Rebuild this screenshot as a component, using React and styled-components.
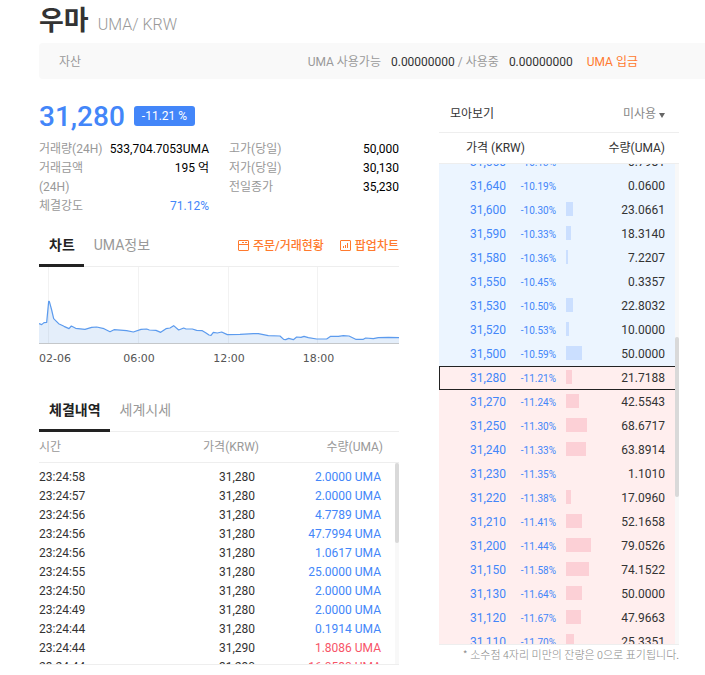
import React, { useEffect, useRef } from "react";
import styled, { createGlobalStyle } from "styled-components";

const GlobalStyle = createGlobalStyle`
  * { box-sizing: border-box; }
  body {
    margin: 0;
    background: #fff;
    color: #333;
    font: 400 12px/19px Roboto, "Noto Sans CJK KR", sans-serif;
    overflow: hidden;
  }
  button, select { font: inherit; color: inherit; border: 0; background: none; padding: 0; margin: 0; cursor: pointer; }
  a { color: #ff7a2e; text-decoration: none; }
  h1, dl, dd, p { margin: 0; font-weight: inherit; }
`;

const BLUE = "#4386f9";
const RED = "#f75467";

const Page = styled.main`
  padding-left: 39px;
`;

const Title = styled.header`
  display: flex;
  align-items: baseline;
  gap: 9px;
  height: 43px;
  line-height: 42px;
`;

const CoinName = styled.h1`
  font-size: 27px;
  font-weight: 700;
  line-height: 42px;
`;

const Pair = styled.span`
  font-size: 16px;
  font-weight: 300;
  color: #999;
`;

const AssetBar = styled.section`
  display: flex;
  align-items: center;
  justify-content: space-between;
  height: 36px;
  padding: 2px 67px 0 20px;
  border-radius: 4px 0 0 4px;
  background: #f9f9f9;
  color: #999;
`;

const AssetValues = styled.div`
  display: flex;
  align-items: center;
  white-space: pre;
`;

const Amount = styled.span`
  margin-left: 10px;
  color: #333;
`;

const Deposit = styled.a`
  margin-left: 14px;
`;

const Columns = styled.div`
  display: grid;
  grid-template-columns: minmax(0, 3fr) minmax(0, 2fr);
  gap: 40px;
  padding: 16px 26px 0 0;
`;

const PriceLine = styled.div`
  display: flex;
  align-items: center;
  gap: 9px;
  height: 42px;
`;

const Price = styled.strong`
  font-size: 28px;
  font-weight: 500;
  color: ${BLUE};
`;

const Badge = styled.span`
  padding: 0 8px;
  border-radius: 3px;
  background: ${BLUE};
  color: #fff;
  line-height: 20px;
`;

const Stats = styled.div`
  display: grid;
  grid-template-columns: 1fr 1fr;
  gap: 20px;
  padding: 3px 0 9px;
`;

const Stat = styled.div`
  display: flex;
  justify-content: space-between;
`;

const StatName = styled.dt`
  max-width: 70px;
  color: #999;
`;

const StatValue = styled.dd`
  color: ${(p) => (p.$accent ? BLUE : "#000")};
`;

const TabBar = styled.nav`
  display: flex;
  align-items: stretch;
  height: 42px;
  box-shadow: inset 0 -1px #eee;
`;

const Tab = styled.button`
  && {
    padding: 2px 9px 0 10px;
    border-bottom: 3px solid ${(p) => (p.$active ? "#222" : "transparent")};
    color: ${(p) => (p.$active ? "#222" : "#999")};
    font-size: 14px;
    font-weight: ${(p) => (p.$active ? 700 : 400)};
  }
`;

const TabLinks = styled.div`
  display: flex;
  align-items: center;
  gap: 16px;
  margin-left: auto;
  font-weight: 500;
`;

const IconLink = styled.a`
  display: flex;
  align-items: center;
  gap: 3px;
`;

const Plot = styled.svg`
  display: block;
  width: 100%;
  height: 77px;
`;

const Hours = styled.div`
  display: grid;
  grid-template-columns: 55fr 90fr 90fr 125fr;
  height: 46px;
  padding-top: 5px;
  font-family: "DejaVu Sans", "Noto Sans CJK KR", sans-serif;
  font-size: 11px;
  color: #555;
`;

const Hour = styled.span`
  text-align: ${(p) => (p.$first ? "left" : "center")};
  margin-right: ${(p) => (p.$last ? "36px" : "0")};
`;

const Trades = styled.table`
  display: block;
  border-bottom: 1px solid #eee;
`;

const TradeHead = styled.thead`
  display: block;
  border-bottom: 1px solid #eee;
  line-height: 30px;
  color: #999;
`;

const TradeArea = styled.div`
  position: relative;
`;

const TradeBody = styled.tbody`
  display: block;
  height: 201px;
  padding-top: 5px;
  overflow: hidden;
`;

const TradeRow = styled.tr`
  display: grid;
  grid-template-columns: 1fr 160px 124px;
  padding-right: ${(p) => (p.$head ? 16 : 18)}px;
`;

const HeadCell = styled.th`
  padding: 0;
  font-weight: 400;
  text-align: ${(p) => (p.$left ? "left" : "right")};
`;

const TradeCell = styled.td`
  padding: 0;
  text-align: ${(p) => (p.$left ? "left" : "right")};
  padding-right: ${(p) => (p.$mid ? 2 : 0)}px;
  color: ${(p) => (p.$side === "buy" ? RED : p.$side === "sell" ? BLUE : "#333")};
`;

const Track = styled.div`
  position: absolute;
  right: 0;
  top: ${(p) => p.$top}px;
  bottom: 1px;
  width: 4px;
  background: #f8f8f8;
`;

const Thumb = styled.div`
  position: absolute;
  top: ${(p) => p.$at}%;
  width: 4px;
  height: ${(p) => p.$size}px;
  border-radius: 2px;
  background: #d9d9d9;
`;

const GroupBar = styled.div`
  display: flex;
  align-items: center;
  justify-content: space-between;
  height: 38px;
  padding: 2px 14px 0 11px;
  border-bottom: 1px solid #eee;
`;

const GroupPicker = styled.div`
  display: flex;
  align-items: center;
  gap: 3px;
  color: #888;
`;

const GroupSelect = styled.select`
  && {
    appearance: none;
    outline: none;
    field-sizing: content;
  }
`;

const BookArea = styled.div`
  position: relative;
`;

const Book = styled.table`
  display: block;
  border-bottom: 1px solid #eee;
`;

const BookHead = styled.thead`
  display: block;
  height: 31px;
  border-bottom: 1px solid #eee;
  line-height: 31px;
`;

const BookHeadRow = styled.tr`
  display: flex;
  justify-content: space-between;
  padding: 0 14px 0 27px;
`;

const BookBody = styled.tbody`
  display: block;
  height: 480px;
  overflow: hidden auto;
  scrollbar-width: none;
`;

const BookRow = styled.tr`
  display: grid;
  grid-template-columns: 67px 50px 10px 1fr 70px 14px;
  align-items: center;
  height: 24px;
  background: ${(p) => (p.$side === "ask" ? "#ecf5ff" : "#ffeeee")};
  box-shadow: ${(p) => (p.$current ? "inset 0 0 0 1px #222" : "none")};
`;

const BookCell = styled.td`
  padding: 0;
  grid-column: ${(p) => p.$col};
  text-align: right;
  color: ${(p) => (p.$blue ? BLUE : "#333")};
  font-size: ${(p) => (p.$small ? 10 : 12)}px;
`;

const DepthCell = styled.td`
  grid-column: 4;
  height: 16px;
  padding: 0;
`;

const Depth = styled.div`
  height: 14px;
  background: ${(p) => (p.$side === "ask" ? "#cbdfff" : "#fcd0d6")};
`;

const Note = styled.p`
  display: flex;
  justify-content: flex-end;
  white-space: nowrap;
  font-family: "Noto Sans CJK KR", sans-serif;
  font-size: 11px;
  font-weight: 300;
  color: #888;
`;

const trades = [
  ["23:24:58", "31,280", "2.0000", "sell"],
  ["23:24:57", "31,280", "2.0000", "sell"],
  ["23:24:56", "31,280", "4.7789", "sell"],
  ["23:24:56", "31,280", "47.7994", "sell"],
  ["23:24:56", "31,280", "1.0617", "sell"],
  ["23:24:55", "31,280", "25.0000", "sell"],
  ["23:24:50", "31,280", "2.0000", "sell"],
  ["23:24:49", "31,280", "2.0000", "sell"],
  ["23:24:44", "31,280", "0.1914", "sell"],
  ["23:24:44", "31,290", "1.8086", "buy"],
  ["23:24:44", "31,290", "16.0580", "buy"],
];

const orders = [
  ["31,660", "-10.13%", "0.7981", "ask"],
  ["31,640", "-10.19%", "0.0600", "ask"],
  ["31,600", "-10.30%", "23.0661", "ask"],
  ["31,590", "-10.33%", "18.3140", "ask"],
  ["31,580", "-10.36%", "7.2207", "ask"],
  ["31,550", "-10.45%", "0.3357", "ask"],
  ["31,530", "-10.50%", "22.8032", "ask"],
  ["31,520", "-10.53%", "10.0000", "ask"],
  ["31,500", "-10.59%", "50.0000", "ask"],
  ["31,280", "-11.21%", "21.7188", "bid"],
  ["31,270", "-11.24%", "42.5543", "bid"],
  ["31,250", "-11.30%", "68.6717", "bid"],
  ["31,240", "-11.33%", "63.8914", "bid"],
  ["31,230", "-11.35%", "1.1010", "bid"],
  ["31,220", "-11.38%", "17.0960", "bid"],
  ["31,210", "-11.41%", "52.1658", "bid"],
  ["31,200", "-11.44%", "79.0526", "bid"],
  ["31,150", "-11.58%", "74.1522", "bid"],
  ["31,130", "-11.64%", "50.0000", "bid"],
  ["31,120", "-11.67%", "47.9663", "bid"],
  ["31,110", "-11.70%", "25.3351", "bid"],
];

const line =
  "0,170 8,173 15,167 23,166 29,103 31,103 38,129 44,155 59,170 75,178 90,185 97,177 110,184 138,187 158,181 173,180 195,185 213,194 225,188 263,191 283,195 306,187 323,186 331,189 351,190 365,196 381,185 393,183 404,176 419,189 434,183 441,186 460,186 473,190 490,191 500,197 510,204 516,205 523,196 535,198 548,195 565,203 603,202 643,200 658,200 688,206 723,207 734,217 740,218 749,214 763,218 773,210 786,211 795,208 808,212 833,216 863,216 875,208 898,208 913,206 930,207 950,217 973,217 980,213 1003,215 1018,212 1048,211 1080,212";

function Chart() {
  return (
    <Plot viewBox="0 0 1080 231" preserveAspectRatio="none" role="img" aria-label="차트">
      <g fill="#f2f2f2">
        {[27, 297, 567, 834].map((x) => (
          <rect key={x} x={x} width="3" height="228" />
        ))}
      </g>
      <polygon points={`0,229 ${line} 1080,229`} fill="#4a90dc" fillOpacity="0.15" />
      <polyline points={line} fill="none" stroke="#5c9bee" strokeWidth="3.6" strokeLinejoin="round" />
      <rect y="228" width="1080" height="3" fill="#c4c7ca" />
    </Plot>
  );
}

function OrdersIcon() {
  return (
    <svg width="12" height="12" viewBox="0 0 12 12" fill="none" stroke="#ff7a2e" aria-hidden="true">
      <rect x="0.5" y="0.5" width="10" height="10" rx="0.5" />
      <path d="M1 4.5H10M4 2.5H6M7 2.5H9" />
    </svg>
  );
}

function PopupIcon() {
  return (
    <svg width="12" height="12" viewBox="0 0 12 12" fill="none" stroke="#ff7a2e" aria-hidden="true">
      <rect x="0.5" y="0.5" width="10" height="10" rx="0.5" />
      <path d="M3.5 6V8M5.5 5V8M7.5 3V8" />
    </svg>
  );
}

function Info({ name, value, accent }) {
  return (
    <Stat>
      <StatName>{name}</StatName>
      <StatValue $accent={accent}>{value}</StatValue>
    </Stat>
  );
}

function OrderBook() {
  const body = useRef(null);
  useEffect(() => {
    body.current.scrollTop = 14;
  }, []);
  return (
    <section>
      <GroupBar>
        <label htmlFor="group">모아보기</label>
        <GroupPicker>
          <GroupSelect id="group" defaultValue="off">
            <option value="off">미사용</option>
          </GroupSelect>
          <svg width="6" height="7" viewBox="0 0 6 7" aria-hidden="true">
            <path d="M0 2H6L3 7Z" fill="#666" />
          </svg>
        </GroupPicker>
      </GroupBar>
      <BookArea>
        <Book>
          <BookHead>
            <BookHeadRow>
              <HeadCell $left>가격 (KRW)</HeadCell>
              <HeadCell>수량(UMA)</HeadCell>
            </BookHeadRow>
          </BookHead>
          <BookBody ref={body}>
            {orders.map(([price, rate, qty, side]) => (
              <BookRow key={price} $side={side} $current={price === "31,280"}>
                <BookCell $col={1} $blue>{price}</BookCell>
                <BookCell $col={2} $blue $small>{rate}</BookCell>
                <DepthCell>
                  <Depth $side={side} style={{ width: Math.floor(Number(qty) * 0.32) }} />
                </DepthCell>
                <BookCell $col={5}>{qty}</BookCell>
              </BookRow>
            ))}
          </BookBody>
        </Book>
        <Track $top={31}>
          <Thumb $at={36} $size={160} />
        </Track>
      </BookArea>
      <Note>* 소수점 4자리 미만의 잔량은 0으로 표기됩니다.</Note>
    </section>
  );
}

export default function App() {
  return (
    <>
      <GlobalStyle />
      <Page>
        <Title>
          <CoinName>우마</CoinName>
          <Pair>UMA/ KRW</Pair>
        </Title>
        <AssetBar>
          <span>자산</span>
          <AssetValues>
            <span>UMA 사용가능</span>
            <Amount>0.00000000</Amount>
            <span> / 사용중</span>
            <Amount>0.00000000</Amount>
            <Deposit href="#deposit">UMA 입금</Deposit>
          </AssetValues>
        </AssetBar>
        <Columns>
          <section>
            <PriceLine>
              <Price>31,280</Price>
              <Badge>-11.21 %</Badge>
            </PriceLine>
            <Stats>
              <dl>
                <Info name="거래량(24H)" value="533,704.7053UMA" />
                <Info name="거래금액 (24H)" value="195 억" />
                <Info name="체결강도" value="71.12%" accent />
              </dl>
              <dl>
                <Info name="고가(당일)" value="50,000" />
                <Info name="저가(당일)" value="30,130" />
                <Info name="전일종가" value="35,230" />
              </dl>
            </Stats>
            <TabBar>
              <Tab $active>차트</Tab>
              <Tab>UMA정보</Tab>
              <TabLinks>
                <IconLink href="#orders"><OrdersIcon />주문/거래현황</IconLink>
                <IconLink href="#popup"><PopupIcon />팝업차트</IconLink>
              </TabLinks>
            </TabBar>
            <Chart />
            <Hours>
              <Hour $first>02-06</Hour>
              <Hour>06:00</Hour>
              <Hour>12:00</Hour>
              <Hour $last>18:00</Hour>
            </Hours>
            <TabBar>
              <Tab $active>체결내역</Tab>
              <Tab>세계시세</Tab>
            </TabBar>
            <TradeArea>
              <Trades>
                <TradeHead>
                  <TradeRow $head>
                    <HeadCell $left>시간</HeadCell>
                    <HeadCell>가격(KRW)</HeadCell>
                    <HeadCell>수량(UMA)</HeadCell>
                  </TradeRow>
                </TradeHead>
                <TradeBody>
                  {trades.map(([time, price, qty, side], i) => (
                    <TradeRow key={i}>
                      <TradeCell $left>{time}</TradeCell>
                      <TradeCell $mid>{price}</TradeCell>
                      <TradeCell $side={side}>{qty} UMA</TradeCell>
                    </TradeRow>
                  ))}
                </TradeBody>
              </Trades>
              <Track $top={31}>
                <Thumb $at={0} $size={80} />
              </Track>
            </TradeArea>
          </section>
          <OrderBook />
        </Columns>
      </Page>
    </>
  );
}
